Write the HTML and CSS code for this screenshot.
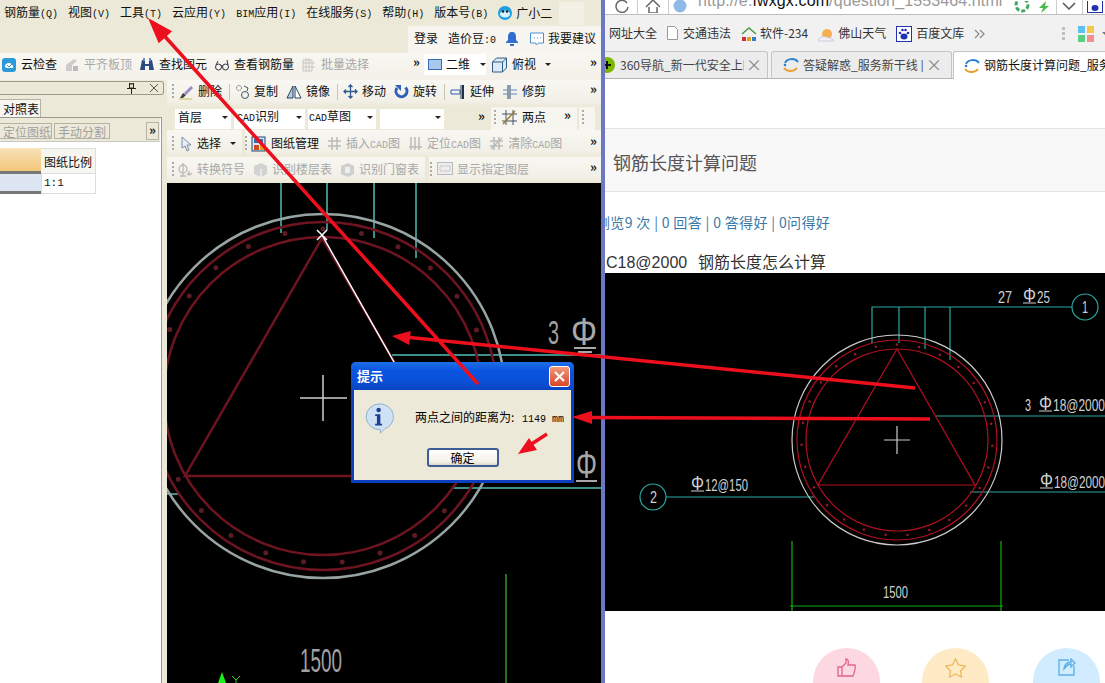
FILE: index.html
```html
<!DOCTYPE html>
<html lang="zh">
<head>
<meta charset="utf-8">
<title>钢筋长度计算问题</title>
<link rel="stylesheet" href="styles.css">
</head>
<body>
<div class="page">
  <section class="app">
    <nav class="menu">
      <span>钢筋量<i>(Q)</i></span><span>视图<i>(V)</i></span><span>工具<i>(T)</i></span><span>云应用<i>(Y)</i></span><span><i>BIM</i>应用<i>(I)</i></span><span>在线服务<i>(S)</i></span><span>帮助<i>(H)</i></span><span>版本号<i>(B)</i></span>
      <span class="xiao"><svg width="16" height="16" viewBox="0 0 16 16"><circle cx="8" cy="8" r="7" fill="#1e9fe0"/><ellipse cx="8" cy="9" rx="5" ry="3.600" fill="#d8f2ff"/><circle cx="6" cy="6.500" r="1.300" fill="#123"/><circle cx="10" cy="6.500" r="1.300" fill="#123"/></svg>广小二</span>
      <b class="menu-box"></b>
    </nav>
    <div class="status-row">
      <div class="status">
        <span>登录</span><span class="dou">造价豆<i>:0</i></span>
        <svg width="14" height="16" viewBox="0 0 14 16"><path d="M7 1c3 0 4 2 4 5v3l2 2v1H1v-1l2-2V6c0-3 1-5 4-5z" fill="#2f6fd0"/><rect x="5" y="13" width="4" height="2" fill="#2f6fd0"/></svg>
        <svg class="chat" width="16" height="16" viewBox="0 0 16 16"><path d="M1.500 2h13v10h-5l-2 2-1-2h-5z" fill="#fff" stroke="#4a90d0"/><path d="M5 7h1M8 7h1M11 7h1" stroke="#4a90d0"/></svg>
        <span>我要建议</span>
      </div>
    </div>
    <div class="tool-row top-tools">
      <div class="tool"><svg width="16" height="16" viewBox="0 0 16 16"><rect x="1" y="1" width="14" height="14" rx="3" fill="#2d9ad8"/><path d="M4 9c0-2 2-3 4-3s3 1 4 3-1 2-4 2-4 0-4-2z" fill="#fff"/><path d="M6 8l2 2 3-3" stroke="#2d9ad8" fill="none"/></svg><span>云检查</span></div>
      <div class="tool off"><svg width="16" height="16" viewBox="0 0 16 16"><path d="M2 14V8l8-6 3 2-5 4v6z" fill="#ccc"/><rect x="9" y="9" width="5" height="5" fill="#bbb"/></svg><span>平齐板顶</span></div>
      <div class="tool"><svg width="16" height="16" viewBox="0 0 16 16"><path d="M3 3h3v4h4V3h3l2 10h-5V9H6v4H1z" fill="#2b4a80"/><rect x="4" y="1" width="2" height="3" fill="#6b8fc0"/><rect x="10" y="1" width="2" height="3" fill="#6b8fc0"/></svg><span>查找图元</span></div>
      <div class="tool"><svg width="16" height="16" viewBox="0 0 16 16" fill="none" stroke="#334"><circle cx="4.500" cy="10" r="3"/><circle cx="11.500" cy="10" r="3"/><path d="M7 9h2M2 8l2-4M14 8l-1-5"/></svg><span>查看钢筋量</span></div>
      <div class="tool off"><svg width="16" height="16" viewBox="0 0 16 16"><path d="M2 3h9v11H2zM5 1v13M8 1v13M2 6h12M2 10h12" fill="none" stroke="#c4c4c4"/></svg><span>批量选择</span></div>
      <b class="more more-a">»</b>
      <div class="view-drop">
        <svg width="14" height="11" viewBox="0 0 14 11"><rect x=".5" y=".5" width="13" height="10" fill="#a9c8ee" stroke="#3a6ab0"/></svg><span>二维</span><em class="caret"></em>
      </div>
      <div class="tool fu"><svg width="17" height="17" viewBox="0 0 17 17"><path d="M1.500 6l4-4h10v10l-4 4h-10z" fill="#dfe9f5" stroke="#2f5f86"/><path d="M1.500 6h10v10M11.500 6l4-4" fill="none" stroke="#2f5f86"/></svg><span>俯视</span><em class="caret"></em></div>
      <b class="more more-end">»</b>
    </div>
    <div class="work">
      <aside class="side">
        <div class="side-head"><svg width="9" height="11" viewBox="0 0 9 11"><path d="M2.500 0v5h4V0zM0 5.500h9M4.500 6v5M2 1h5" fill="none" stroke="#222"/></svg><svg width="10" height="10" viewBox="0 0 10 10"><path d="M1 1l8 8M9 1L1 9" stroke="#555"/></svg></div>
        <div class="side-tab">对照表</div>
        <div class="pane">
          <div class="pane-bar"><span class="flat">定位图纸</span><span class="flat wide">手动分割</span><b class="box-more">»</b></div>
          <div class="grid">
            <div class="cell-orange"></div><div class="cell-head">图纸比例</div>
            <div class="cell-sel"></div><div class="cell-val">1:1</div>
          </div>
        </div>
      </aside>
      <div class="main">
        <div class="tool-row r4">
          <em class="grip"></em>
          <div class="tool"><svg width="16" height="16" viewBox="0 0 16 16"><path d="M2 14l3-5 3 2-3 3z" fill="#444"/><path d="M6 9l7-7 2 2-7 7z" fill="#9b8bc8"/><path d="M1 15h13" stroke="#c8c050"/></svg><span>删除</span></div><u class="sep"></u>
          <div class="tool"><svg width="15" height="16" viewBox="0 0 15 16" fill="none" stroke="#456"><circle cx="4" cy="4" r="2.500" stroke-dasharray="1 1"/><circle cx="10" cy="11" r="3.500"/><path d="M9 2l4 2-1 3"/></svg><span>复制</span></div>
          <div class="tool"><svg width="16" height="16" viewBox="0 0 16 16"><path d="M7 2v12H1z" fill="#bcd" stroke="#246"/><path d="M9 2v12h6z" fill="#fff" stroke="#246"/></svg><span>镜像</span></div><u class="sep"></u>
          <div class="tool"><svg width="15" height="15" viewBox="0 0 15 15"><path d="M7.500 1v13M1 7.500h13M5.500 3l2-2 2 2M5.500 12l2 2 2-2M3 5.500l-2 2 2 2M12 5.500l2 2-2 2" fill="none" stroke="#2d5a90" stroke-width="1.300"/></svg><span>移动</span></div>
          <div class="tool"><svg width="15" height="15" viewBox="0 0 15 15"><path d="M11.500 3.500A5.500 5.500 0 1 1 3 4" fill="none" stroke="#2f5fb8" stroke-width="3"/><path d="M1 1h6v6z" fill="#2f5fb8"/></svg><span>旋转</span></div><u class="sep"></u>
          <div class="tool"><svg width="16" height="16" viewBox="0 0 16 16"><path d="M1 6h9v4H1z" fill="none" stroke="#2f5fb8"/><path d="M13 1v14" stroke="#234" stroke-width="2"/><path d="M11 1v14" stroke="#234"/></svg><span>延伸</span></div>
          <div class="tool"><svg width="16" height="16" viewBox="0 0 16 16"><path d="M6 1v14M8 1v14" stroke="#246"/><path d="M1 6h5M1 10h5M9 6h6M9 10h6" stroke="#5b8ac8"/></svg><span>修剪</span></div>
          <b class="more more-end">»</b>
        </div>
        <div class="tool-row r5">
          <div class="drop d1">首层<em class="caret"></em></div>
          <div class="drop d2"><span><i>CAD</i>识别</span><em class="caret"></em></div>
          <div class="drop d3"><span><i>CAD</i>草图</span><em class="caret"></em></div>
          <div class="drop d4"><em class="caret"></em></div>
          <b class="more more-b">»</b>
          <div class="group"><em class="grip"></em><svg width="16" height="16" viewBox="0 0 16 16"><path d="M1 5h15M1 12h15M5 1v15M12 1v15" stroke="#456" fill="none"/><path d="M2 15L14 2" stroke="#a08030" stroke-width="1.500"/></svg><span>两点</span><b class="more more-c">»</b></div>
          <div class="group tiny"><em class="grip"></em></div>
        </div>
        <div class="tool-row r6">
          <em class="grip"></em>
          <div class="tool sel"><svg width="12" height="16" viewBox="0 0 12 16"><path d="M2 1v11l3-2 2 5 2-1-2-5h4z" fill="#e8eef8" stroke="#7a8aa0"/></svg><span>选择</span><em class="caret"></em></div>
          <u class="gap-bar"></u><em class="grip"></em>
          <div class="tool mgmt"><svg width="16" height="16" viewBox="0 0 16 16"><rect x="1" y="1" width="13" height="14" fill="#d8e8f8" stroke="#246"/><rect x="3" y="3" width="9" height="4" fill="#2f70b0"/><rect x="3" y="9" width="5" height="5" fill="#d04820"/><rect x="9" y="9" width="5" height="5" fill="#e0a020"/></svg><span>图纸管理</span></div>
          <div class="tool off"><svg width="15" height="15" viewBox="0 0 15 15"><path d="M5 1v13M10 1v13M1 5h13M1 10h13" stroke="#bbb" stroke-width="1.500"/></svg><span>插入<i>CAD</i>图</span></div>
          <div class="tool off"><svg width="15" height="15" viewBox="0 0 15 15"><path d="M3 1v13M7 1v13M11 1v13M1 11h13" stroke="#bbb" stroke-width="1.500"/></svg><span>定位<i>CAD</i>图</span></div>
          <div class="tool off"><svg width="15" height="15" viewBox="0 0 15 15"><path d="M5 1v13M10 1v13M1 5h13M1 10h13M2 13L13 2" stroke="#bbb" stroke-width="1.500"/></svg><span>清除<i>CAD</i>图</span></div>
          <b class="more more-end">»</b>
        </div>
        <div class="tool-row r7">
          <em class="grip"></em>
          <div class="tool off"><svg width="15" height="15" viewBox="0 0 15 15" fill="none" stroke="#bbb" stroke-width="1.300"><circle cx="5" cy="7" r="4"/><path d="M5 1v13M2 14h6M11 9v5M9 12h5"/></svg><span>转换符号</span></div>
          <div class="tool off"><svg width="15" height="15" viewBox="0 0 15 15"><path d="M1 4l7-3 6 3v8l-6 3-7-3z" fill="#d2d2d2"/><path d="M8 7v8" stroke="#fff"/></svg><span>识别楼层表</span></div>
          <div class="tool off"><svg width="15" height="15" viewBox="0 0 15 15"><path d="M1 4l7-3 6 3v8l-6 3-7-3z" fill="#cfcfcf"/><path d="M5 5h5v6H5z" fill="#eee"/></svg><span>识别门窗表</span></div>
          <u class="gap-bar"></u><em class="grip"></em>
          <div class="tool off"><svg width="16" height="13" viewBox="0 0 16 13"><rect x=".5" y=".5" width="15" height="12" fill="#eee" stroke="#bbb"/><path d="M3 4h10v5H3z" fill="none" stroke="#c8c8c8"/></svg><span>显示指定图层</span></div>
          <b class="more more-end">»</b>
        </div>
        <svg class="canvas" viewBox="167 183 434 500" width="434" height="500">
          <g class="teal"><path d="M281 183v50M327 183v47M374 183v55M416 183v75M392 355h209M452 488h149M167 494h13"/></g>
          <circle class="ring-w" cx="323" cy="396" r="182"/>
          <circle class="ring-r" cx="323" cy="396" r="174"/>
          <circle class="ring-r" cx="323" cy="396" r="159"/>
          <circle class="dots" cx="323" cy="396" r="167" transform="rotate(-90 323 396)"/>
          <path class="ring-r" d="M322 238L185 476H461Z"/>
          <path class="white-thin" d="M300 398h47M323 375v46"/>
          <path class="white-line" d="M322 235l72 127M317 230l10 10M327 230l-10 10"/>
          <path class="green" d="M506 574v109"/>
          <path class="greenfill" d="M222 672l4 11h-8z"/>
          <path class="green-thin" d="M232 676l4 4 4-4M236 680v3"/>
          <text class="cad-big" x="300" y="672" textLength="42" lengthAdjust="spacingAndGlyphs">1500</text>
          <text class="cad-big" x="548" y="344" textLength="11" lengthAdjust="spacingAndGlyphs">3</text>
          <text class="cad-phi" x="571" y="345" textLength="26" lengthAdjust="spacingAndGlyphs">Φ</text>
          <path class="gray-thin" d="M574 348h22M578 352h14"/>
          <text class="cad-phi" x="576" y="478" textLength="21" lengthAdjust="spacingAndGlyphs">Φ</text>
          <path class="gray-thin" d="M576 481h21"/>
        </svg>
      </div>
    </div>
  </section>
  <div class="divider"></div>
  <section class="browser">
    <div class="addr">
      <svg class="a-c" width="14" height="14" viewBox="0 0 14 14"><path d="M12 4A6 6 0 1 0 13 8" fill="none" stroke="#666" stroke-width="1.500"/></svg>
      <u class="a-line l1"></u>
      <svg class="a-h" width="16" height="14" viewBox="0 0 16 14"><path d="M1 8l7-7 7 7M4 8v6h8V8" fill="none" stroke="#666" stroke-width="1.500"/></svg>
      <u class="a-line l2"></u>
      <svg class="a-g" width="14" height="14" viewBox="0 0 14 14"><circle cx="7" cy="7" r="6.500" fill="#8fb9e8"/></svg>
      <span class="url">http://e.<b>fwxgx.com</b>/question_1553464.html</span>
      <svg class="a-r" width="16" height="12" viewBox="0 0 16 12"><circle cx="8" cy="4" r="6" fill="none" stroke="#3ca860" stroke-width="3" stroke-dasharray="4 2"/></svg>
      <svg class="a-b" width="12" height="12" viewBox="0 0 12 12"><path d="M8 0L1 7h4l-2 5 8-7H7z" fill="#48b848"/></svg>
      <u class="a-line l3"></u>
      <svg class="a-v" width="14" height="10" viewBox="0 0 14 10"><path d="M1 1l6 6 6-6" fill="none" stroke="#555" stroke-width="1.500"/></svg>
      <u class="a-line l4"></u>
      <svg class="a-p" width="16" height="12" viewBox="0 0 16 12"><rect x=".5" y="-4" width="15" height="15.500" fill="#fff" stroke="#2030b0"/><ellipse cx="8" cy="7" rx="3.500" ry="3" fill="#2030b0"/></svg>
    </div>
    <div class="bookmarks">
      <span class="bm first">网址大全</span>
      <span class="bm"><svg width="11" height="14" viewBox="0 0 11 14"><path d="M.5.500h7l3 3v10H.5z" fill="#fff" stroke="#999"/></svg>交通违法</span>
      <span class="bm"><svg width="16" height="16" viewBox="0 0 16 16"><path d="M1 8l7-6 7 6" fill="none" stroke="#4a9a40" stroke-width="1.500"/><rect x="1" y="11" width="4" height="4" fill="#d03030"/><rect x="6" y="11" width="4" height="4" fill="#e0a020"/><rect x="11" y="11" width="4" height="4" fill="#3080d0"/></svg>软件-234</span>
      <span class="bm"><svg width="16" height="16" viewBox="0 0 16 16"><circle cx="9" cy="8" r="5" fill="#f4b050"/><path d="M0 15c1-4 5-5 8-4s7 1 8 4z" fill="#eef2f6" stroke="#ccd"/></svg>佛山天气</span>
      <span class="bm"><svg width="16" height="16" viewBox="0 0 16 16"><rect x=".5" y=".5" width="15" height="15" fill="#fff" stroke="#2030b0"/><ellipse cx="8" cy="10.500" rx="3.500" ry="3" fill="#2030b0"/><circle cx="4" cy="7" r="1.300" fill="#2030b0"/><circle cx="12" cy="7" r="1.300" fill="#2030b0"/><circle cx="6.500" cy="4" r="1.300" fill="#2030b0"/><circle cx="9.500" cy="4" r="1.300" fill="#2030b0"/></svg>百度文库</span>
      <svg class="bm-more" width="12" height="10" viewBox="0 0 12 10"><path d="M1 1l4 4-4 4M6 1l4 4-4 4" fill="none" stroke="#888" stroke-width="1.200"/></svg>
      <em class="bm-grip"></em>
      <svg class="apps" width="16" height="16" viewBox="0 0 16 16"><rect width="7" height="7" fill="#5cc0f0"/><rect x="9" width="7" height="7" fill="#f4c84a"/><rect y="9" width="7" height="7" fill="#58d080"/><rect x="9" y="9" width="7" height="7" fill="#f09090"/></svg>
      <em class="bm-caret"></em>
    </div>
    <div class="tabs">
      <div class="tab t1"><svg width="14" height="16" viewBox="0 0 14 16"><circle cx="4" cy="8" r="8" fill="#7ab800"/><path d="M0 8h8M4 4v8" stroke="#111" stroke-width="2"/></svg><span class="tab-text">360导航_新一代安全上网</span><b>×</b></div>
      <div class="tab t2"><svg class="ie" width="16" height="14" viewBox="0 0 16 14"><path d="M2 5c2-5 10-5 13-1" fill="none" stroke="#2a80d0" stroke-width="2"/><path d="M1 10c3 4 10 4 13 0" fill="none" stroke="#e8a030" stroke-width="2"/><circle cx="2" cy="7" r="1.300" fill="#2a80d0"/></svg><span class="tab-text">答疑解惑_服务新干线 | 问</span><b>×</b></div>
      <div class="tab t3"><svg class="ie" width="16" height="14" viewBox="0 0 16 14"><path d="M2 5c2-5 10-5 13-1" fill="none" stroke="#2a80d0" stroke-width="2"/><path d="M1 10c3 4 10 4 13 0" fill="none" stroke="#e8a030" stroke-width="2"/><circle cx="2" cy="7" r="1.300" fill="#2a80d0"/></svg><span class="tab-text">钢筋长度计算问题_服务新干线</span></div>
    </div>
    <div class="web-gap"></div>
    <h1 class="q-title">钢筋长度计算问题</h1>
    <p class="stats">浏览9 次 | 0 回答 | 0 答得好 | 0问得好</p>
    <p class="q-body">C18@2000&nbsp; 钢筋长度怎么计算</p>
    <svg class="drawing" viewBox="605 273 500 338" width="500" height="338">
      <path class="teal2" d="M872 343V307H1072M899 343V307M925 349V307M950 360V307M936 416H1105M970 492H1105M666 497H815"/>
      <circle class="teal2" cx="1085" cy="307" r="13"/>
      <circle class="teal2" cx="653" cy="497" r="13"/>
      <circle class="thin-w" cx="897" cy="440" r="105"/>
      <circle class="thin-r" cx="897" cy="440" r="100"/>
      <circle class="thin-r" cx="897" cy="440" r="91"/>
      <circle class="dots2" cx="897" cy="440" r="95.500" transform="rotate(-90 897 440)"/>
      <path class="thin-r" d="M897 349L818 485H975Z"/>
      <path class="thin-w" d="M884 440h26M897 426v28"/>
      <path class="green2" d="M792 541V611M1001 541V611M790 606H1003"/>
      <text class="d-text" x="883" y="598" textLength="25" lengthAdjust="spacingAndGlyphs">1500</text>
      <text class="d-text" x="998" y="303" textLength="14" lengthAdjust="spacingAndGlyphs">27</text>
      <text class="d-phi" x="1023" y="302" textLength="13" lengthAdjust="spacingAndGlyphs">Φ</text>
      <text class="d-text" x="1037" y="303" textLength="13" lengthAdjust="spacingAndGlyphs">25</text>
      <path class="thin-g" d="M1023 303h13"/>
      <text class="d-text" x="1082" y="313" textLength="6" lengthAdjust="spacingAndGlyphs">1</text>
      <text class="d-text" x="1025" y="411" textLength="6" lengthAdjust="spacingAndGlyphs">3</text>
      <text class="d-phi" x="1039" y="410" textLength="13" lengthAdjust="spacingAndGlyphs">Φ</text>
      <text class="d-text" x="1053" y="411" textLength="52" lengthAdjust="spacingAndGlyphs">18@2000</text>
      <path class="thin-g" d="M1039 411h13"/>
      <text class="d-phi" x="1040" y="487" textLength="13" lengthAdjust="spacingAndGlyphs">Φ</text>
      <text class="d-text" x="1054" y="488" textLength="51" lengthAdjust="spacingAndGlyphs">18@2000</text>
      <path class="thin-g" d="M1040 488h13"/>
      <text class="d-phi" x="691" y="490" textLength="13" lengthAdjust="spacingAndGlyphs">Φ</text>
      <text class="d-text" x="705" y="491" textLength="43" lengthAdjust="spacingAndGlyphs">12@150</text>
      <path class="thin-g" d="M691 491h13"/>
      <text class="d-text" x="650" y="503" textLength="7" lengthAdjust="spacingAndGlyphs">2</text>
    </svg>
    <div class="actions">
      <span class="act pink"><svg width="20" height="20" viewBox="0 0 20 20" fill="none" stroke="#e0648a" stroke-width="1.300"><path d="M1 9h4v9H1zM5 9l4-4V1c2 0 3 2 2 6h7c1 4-1 8-2 11H5"/></svg></span>
      <span class="act yellow"><svg width="21" height="20" viewBox="0 0 21 20" fill="none" stroke="#eeb95c" stroke-width="1.300"><path d="M10.500 1l3 6 7 1-5 5 1 6-6-3-6 3 1-6-5-5 7-1z"/></svg></span>
      <span class="act blue"><svg width="18" height="18" viewBox="0 0 18 18" fill="none" stroke="#5aaee8" stroke-width="1.300"><path d="M11 2H1v15h15V8M6 11c0-4 3-7 7-7V1l4 4-4 4V6c-3 0-5 2-7 5z"/></svg></span>
    </div>
  </section>

  <div class="dialog">
    <div class="dlg-title"><span>提示</span><b class="dlg-close"><svg width="13" height="13" viewBox="0 0 13 13"><path d="M2 2l9 9M11 2l-9 9" stroke="#fff" stroke-width="2.200"/></svg></b></div>
    <div class="dlg-body">
      <div class="dlg-msg">
        <svg width="31" height="31" viewBox="0 0 34 36"><path d="M17 1a16 15 0 0 1 6 29l-5 5 0-4A16 15 0 0 1 17 1z" fill="#cfe2f5" stroke="#8aa8c8"/><circle cx="16" cy="8" r="2.600" fill="#1c3f94"/><path d="M12 13h6v11h2v2h-8v-2h2v-9h-2z" fill="#1c3f94"/></svg>
        <span>两点之间的距离为: <i>1149 mm</i></span>
      </div>
      <button class="dlg-ok" type="button">确定</button>
    </div>
  </div>

  <svg class="arrows" viewBox="0 0 1105 683" width="1105" height="683">
    <path class="arrow-line" d="M478 384L160 31M915 388L405 337M930 419L588 417.500M547 434L530 445"/>
    <path class="arrow-head" d="M148 18L158.700 43.300 172.100 31.300ZM392 336L409.300 345 410.700 331ZM572 417L592 411 592 424ZM518 454L537 450 529 438Z"/>
  </svg>
</div>
</body>
</html>
```

FILE: styles.css
```css
* { box-sizing: border-box; }
html, body { margin: 0; padding: 0; background: #fff; }
body { font: 12px/1.2 "Noto Sans CJK SC", "Liberation Sans", sans-serif; color: #111; }
i { font-style: normal; font-family: "Liberation Mono", monospace; font-size: 10px; }
em { font-style: normal; }
u { text-decoration: none; }
svg { display: block; flex: none; }
h1, p { margin: 0; font-weight: normal; }

.page { position: relative; display: flex; width: 1105px; height: 683px; overflow: hidden; }

/* Application window */
.app { display: flex; flex-direction: column; width: 601px; height: 683px; background: #ece9d8; overflow: hidden; }
.menu { display: flex; align-items: center; height: 26px; padding-left: 4px; gap: 10px; white-space: nowrap; }
.xiao { display: flex; align-items: center; gap: 3px; margin-left: -1px; }
.menu-box { width: 25px; height: 23px; margin-left: -3px; background: #f3f1e6; }

.status-row { display: flex; justify-content: flex-end; height: 27px; }
.status { display: flex; align-items: center; width: 193px; padding: 0 0 2px 6px; background: #f6f5ef; }
.dou { margin-left: 10px; }
.status svg { margin-left: 9px; }
.status .chat { margin: 0 3px 0 10px; }

.tool-row { display: flex; align-items: center; flex: none; height: 27px; background: linear-gradient(#f8f7f2, #f1efe6 80%, #ece9d8); white-space: nowrap; }
.tool { display: flex; align-items: center; gap: 4px; white-space: nowrap; }
.off { color: #a8a8a8; }
.more { font-size: 13px; line-height: 1; color: #111; margin-top: -6px; }
.more-end { margin-left: auto; margin-right: 4px; }
.caret { display: inline-block; flex: none; width: 0; height: 0; border: 3px solid transparent; border-top: 3px solid #222; border-bottom: 0; }
.grip { flex: none; width: 2px; height: 15px; background: repeating-linear-gradient(#aaa 0 2px, transparent 2px 4px); }
.sep { flex: none; width: 1px; height: 16px; margin: 0 -3px 0 -1px; background: #c8c5b4; }

.top-tools { padding: 0 0 4px 1px; gap: 7px; background: linear-gradient(#f8f7f2, #f2f0e7); }
.more-a { margin-left: 37px; }
.view-drop { display: flex; align-items: center; gap: 4px; height: 21px; margin-left: -3px; padding-left: 4px; width: 62px; background: #fff; }
.view-drop .caret { margin-left: 6px; }
.fu .caret { margin-left: 5px; }
.fu { margin-left: -2px; }

.work { display: flex; flex: 1; min-height: 0; }
.side { width: 167px; flex: none; display: flex; flex-direction: column; padding-top: 1px; }
.side-head { display: flex; align-items: center; justify-content: flex-end; gap: 13px; width: 164px; height: 14px; padding-right: 4px; border: 1px solid #9d9b8c; border-left: 0; border-radius: 0 3px 3px 0; background: #ece9d8; }
.side-tab { width: 41px; height: 18px; margin-top: 4px; line-height: 17px; background: #f7f6f1; border: 1px solid #b5b3a4; border-left: 0; border-bottom: 0; text-align: right; padding-right: 1px; }
.pane { flex: 1; width: 162px; background: #fff; border: 1px solid #9a9a92; border-left: 0; border-bottom: 0; }
.pane-bar { display: flex; align-items: center; height: 24px; padding-top: 2px; border-bottom: 1px solid #c8c8c0; margin-right: 1px; background: #ece9d8; }
.flat { width: 52px; height: 16px; line-height: 15px; text-align: right; color: #a0a0a0; border: 1px solid #b5b3a4; border-left: 0; overflow: hidden; white-space: nowrap; }
.wide { width: 56px; margin-left: 2px; border-left: 1px solid #b5b3a4; text-align: center; }
.box-more { width: 13px; height: 18px; margin-left: auto; margin-right: 1px; font-size: 13px; line-height: 13px; text-align: center; border: 1px solid #b5b3a4; }
.grid { display: grid; grid-template-columns: 41px 55px; grid-template-rows: 26px 20px; margin-top: 6px; }
.cell-orange { background: linear-gradient(#f8e2b8, #f2c67a); border-bottom: 3px solid #777; }
.cell-head { padding-left: 3px; line-height: 26px; background: #f6f5ef; border: 1px solid #ddd; border-left: 0; }
.cell-sel { background: #dde6f2; border-bottom: 3px solid #777; }
.cell-val { padding-left: 2px; font-family: "Liberation Mono", monospace; font-size: 11px; line-height: 18px; border: 1px solid #ddd; border-top: 0; }

.main { display: flex; flex-direction: column; width: 434px; flex: none; }
.r4 { padding: 0 0 4px 5px; gap: 8px; }
.r4 > .grip { margin-right: -4px; }
.r5 { height: 23px; padding-left: 8px; background: #ece9d8; }
.drop { display: flex; align-items: center; justify-content: space-between; flex: none; height: 20px; padding: 0 3px 3px; background: #fff; }
.d1 { width: 56px; }
.d2 { width: 71px; margin-left: 3px; }
.d3 { width: 68px; margin-left: 3px; padding-left: 1px; }
.d4 { width: 64px; margin-left: 4px; justify-content: flex-end; }
.more-b { margin-left: 34px; }
.group { display: flex; align-items: center; gap: 5px; width: 86px; height: 23px; margin-left: 6px; padding: 0 0 3px 3px; background: #f6f5ef; }
.more-c { margin-left: auto; margin-right: 6px; }
.tiny { width: 16px; margin-left: 2px; }
.r6 { padding-left: 5px; gap: 6px; }
.sel { gap: 5px; }
.sel .caret { margin-left: 4px; }
.gap-bar { flex: none; width: 3px; height: 27px; margin-right: -6px; background: #ece9d8; }
.mgmt { margin-left: -2px; }
.r6 .off { margin-left: 2px; }
.r7 { height: 26px; padding: 0 0 2px 5px; gap: 8px; }
.r7 > .grip:first-child { margin-right: -4px; }
.r7 .gap-bar { width: 4px; height: 26px; margin: 0 -7px 0 -2px; }
.r7 .gap-bar + .grip { margin-right: -3px; }

.canvas { background: #000; flex: none; }
.teal { stroke: #3c8f88; stroke-width: 2; fill: none; }
.ring-w { fill: none; stroke: #98a4a4; stroke-width: 2.500; }
.ring-r { fill: none; stroke: #6e1420; stroke-width: 2.500; }
.dots { fill: none; stroke: #7c2430; stroke-width: 5; stroke-linecap: round; stroke-dasharray: 0 38.860; opacity: .75; }
.white-thin { stroke: #cfcfcf; stroke-width: 1.500; fill: none; }
.white-line { stroke: #fff; stroke-width: 1.500; fill: none; }
.green { stroke: #2f9a2f; stroke-width: 1.500; fill: none; }
.greenfill { fill: #18f018; }
.green-thin { stroke: #18d018; fill: none; }
.cad-big { font: 33px "Liberation Sans", sans-serif; fill: #a0a0a0; }
.cad-phi { font: 38px "Liberation Sans", sans-serif; fill: #a8a8a8; }
.gray-thin { stroke: #a8a8a8; stroke-width: 2; fill: none; }

.divider { flex: none; width: 4px; background: #6c78c4; }

/* Browser */
.browser { position: relative; display: flex; flex-direction: column; width: 500px; height: 683px; background: #fff; overflow: hidden; }
.addr { display: flex; align-items: flex-end; flex: none; height: 15px; background: #fff; border-bottom: 1px solid #bdbdbd; overflow: hidden; }
.a-line { flex: none; width: 1px; height: 14px; background: #ccc; }
.a-c { margin: 0 0 1px 10px; }
.l1 { margin-left: 8px; }
.a-h { margin: 0 0 1px 7px; }
.l2 { margin-left: 7px; }
.a-g { margin: 0 0 1px 4px; }
.url { flex: none; width: 310px; margin: 0 0 3px 11px; font: 16px/21px "Liberation Sans", sans-serif; color: #999; letter-spacing: .12px; white-space: nowrap; }
.url b { font-weight: normal; color: #111; }
.a-r { margin: 0 0 1px 6px; }
.a-b { margin: 0 0 1px 8px; }
.l3 { margin-left: 6px; }
.a-v { margin: 0 0 2px 5px; }
.l4 { margin-left: 6px; }
.a-p { margin: 0 0 1px 4px; }
.bookmarks { display: flex; align-items: center; flex: none; height: 37px; padding-left: 4px; background: #f1f1f1; color: #333; white-space: nowrap; }
.bm { display: flex; align-items: center; flex: none; gap: 4px; margin-right: 10px; }
.bm:nth-child(2) { gap: 5px; }
.bm:nth-child(3) { gap: 3px; }
.bm-grip { flex: none; width: 3px; height: 13px; margin-left: 76px; background: repeating-linear-gradient(#c0c0c0 0 3px, transparent 3px 5px); }
.apps { margin-left: 13px; }
.bm-caret { flex: none; margin-left: 8px; border: 4px solid transparent; border-top: 4px solid #777; border-bottom: 0; }
.tabs { display: flex; align-items: flex-end; flex: none; height: 27px; background: #f1f1f1; border-bottom: 1px solid #b5b5b5; }
.tab { display: flex; align-items: center; flex: none; height: 27px; color: #444; background: #ececec; border: 1px solid #c4c4c4; border-bottom: 0; border-radius: 3px 3px 0 0; overflow: hidden; white-space: nowrap; }
.tab b { margin-left: auto; font-size: 16px; font-weight: normal; color: #888; }
.t1 { width: 165px; border-left: 0; padding-right: 5px; margin-left: -2px; }
.t2 { width: 181px; margin-left: 3px; padding: 0 9px 0 11px; }
.t3 { width: 155px; margin-left: 1px; padding-left: 10px; background: #fff; color: #111; height: 28px; margin-bottom: -1px; border-right: 0; }
.t1 .tab-text { width: 124px; margin-left: 3px; overflow: hidden; }
.t2 .tab-text { width: 133px; margin-left: 4px; overflow: hidden; }
.t3 .tab-text { margin-left: 4px; }
.web-gap { flex: none; height: 49px; }
.q-title { flex: none; height: 64px; padding-left: 8px; font-size: 18px; line-height: 66px; color: #555; background: #f8f8f8; border-top: 1px solid #e4e4e4; border-bottom: 1px solid #e4e4e4; }
.stats { flex: none; margin: 20px 0 0 -9px; font-size: 14px; line-height: 20px; letter-spacing: .35px; color: #3a78a8; white-space: nowrap; }
.q-body { flex: none; margin: 20px 0 0 1px; font: 16px/22px "Liberation Sans", "Noto Sans CJK SC", sans-serif; word-spacing: 1px; color: #333; height: 21px; white-space: nowrap; }
.drawing { flex: none; background: #000; }
.teal2 { stroke: #2aa8a0; fill: none; stroke-width: 1.200; }
.thin-w { stroke: #ccc; fill: none; stroke-width: 1.200; }
.thin-r { stroke: #b01020; fill: none; stroke-width: 1.200; }
.dots2 { fill: none; stroke: #a01828; stroke-width: 2.500; stroke-linecap: round; stroke-dasharray: 0 22.220; }
.green2 { stroke: #12b012; fill: none; stroke-width: 1.200; }
.d-text { font: 17px "Liberation Sans", sans-serif; fill: #d0d0d0; }
.d-phi { font: 21px "Liberation Sans", sans-serif; fill: #d0d0d0; }
.thin-g { stroke: #d0d0d0; fill: none; }
.actions { display: flex; gap: 42px; flex: none; margin: 37px 0 0 208px; }
.act { display: flex; justify-content: center; align-items: flex-start; flex: none; width: 67px; height: 67px; padding-top: 10px; border-radius: 50%; }
.pink { background: #fdd8e0; }
.yellow { background: #feeac4; }
.blue { background: #d0ecfe; margin-left: 2px; }

/* Dialog */
.dialog { position: absolute; left: 351px; top: 362px; width: 223px; height: 121px; background: #0b3fc0; border-radius: 5px 5px 0 0; padding: 0 3px 3px; display: flex; flex-direction: column; }
.dlg-title { display: flex; align-items: center; justify-content: space-between; flex: none; height: 28px; margin: 0 -3px; padding: 0 4px 0 6px; border-radius: 5px 5px 0 0; background: linear-gradient(#1f6fe8, #0a54e0 30%, #0a4fd8 70%, #0b45c0); color: #fff; font-size: 13px; font-weight: bold; }
.dlg-close { display: flex; align-items: center; justify-content: center; width: 21px; height: 21px; border: 1px solid #fff; border-radius: 3px; background: linear-gradient(#f09878, #d8482a); }
.dlg-body { flex: 1; display: flex; flex-direction: column; align-items: center; background: #ece9d8; }
.dlg-msg { display: flex; align-items: center; align-self: flex-start; width: 100%; height: 40px; margin-top: 8px; padding-left: 10px; font-size: 12px; color: #000; white-space: nowrap; }
.dlg-msg span { margin-left: 20px; }
.dlg-msg i { margin-left: 5px; font-size: 10px; color: #000; }
.dlg-ok { width: 72px; height: 19px; margin: 10px 0 0; padding: 0; font: 12px/15px "Noto Sans CJK SC", sans-serif; color: #000; background: linear-gradient(#fff, #f2f0e6 80%, #dcd8c8); border: 2px solid #3e5f95; border-radius: 3px; }

/* Annotation arrows painted on top of the screenshot */
.arrows { position: absolute; left: 0; top: 0; pointer-events: none; }
.arrow-line { stroke: #ee0f1e; stroke-width: 3.500; fill: none; }
.arrow-head { fill: #ee0f1e; }
```
